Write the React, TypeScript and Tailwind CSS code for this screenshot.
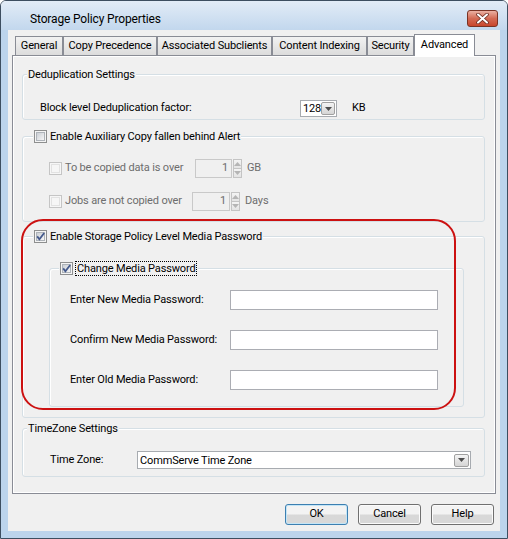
import React from "react";

type Kids = { children?: React.ReactNode };

function CheckBox({ checked = false, disabled = false }: { checked?: boolean; disabled?: boolean }) {
  return (
    <span
      className={`relative flex h-[13px] w-[13px] shrink-0 items-center justify-center border ${
        disabled ? "border-[#c5c5c5] bg-[#f6f6f6]" : "border-[#8e8f8f] bg-[#f4f4f4]"
      }`}
    >
      <span
        className={`block h-[9px] w-[9px] border ${
          disabled
            ? "border-[#e2e2e2] bg-[#f6f6f6]"
            : "border-[#aeb3b9] bg-linear-to-br from-[#cbcfd5] to-[#f6f6f6]"
        }`}
      />
      {checked && (
        <svg className="absolute left-0 top-0" width="11" height="11" viewBox="0 0 11 11">
          <path d="M2.2 5.4 L4.4 8.2 L9.2 2" fill="none" stroke="#44598c" strokeWidth="1.8" />
        </svg>
      )}
    </span>
  );
}

function Arrow({ up = false, color = "#4d4d4d" }: { up?: boolean; color?: string }) {
  return (
    <svg width="7" height="4" viewBox="0 0 7 4">
      <path d={up ? "M0 4h7L3.5 0z" : "M0 0h7L3.5 4z"} fill={color} />
    </svg>
  );
}

function SpinBox({ className }: { className: string }) {
  return (
    <div className="flex h-[19px] items-stretch">
      <div className={`flex items-center justify-end border border-[#c9c9c9] bg-[#f0f0f0] pr-[3px] text-[#6d6d6d] ${className}`}>
        1
      </div>
      <div className="ml-px flex w-[9px] flex-col">
        <div className="flex flex-1 items-center justify-center border border-[#c4c4c4] bg-linear-to-b from-[#f4f4f4] to-[#e4e4e4]">
          <Arrow up color="#b5b5b5" />
        </div>
        <div className="flex flex-1 items-center justify-center border border-t-0 border-[#c4c4c4] bg-linear-to-b from-[#f4f4f4] to-[#e4e4e4]">
          <Arrow color="#b5b5b5" />
        </div>
      </div>
    </div>
  );
}

function Combo({ value, className }: { value: string; className: string }) {
  return (
    <div className={`flex items-center border border-[#a7abb0] bg-white ${className}`}>
      <span className="flex-1 pl-[2px] leading-none">{value}</span>
      <span className="mr-px flex h-[13px] w-[15px] items-center justify-center rounded-[2px] border border-[#a0a0a0] bg-linear-to-b from-[#f4f4f4] to-[#d5d5d5]">
        <Arrow />
      </span>
    </div>
  );
}

function Group({ label, className, children }: { label: React.ReactNode; className: string } & Kids) {
  return (
    <div className={`relative shrink-0 rounded-[3px] border border-[#d5dfe5] shadow-[inset_1px_1px_0_#fff] ${className}`}>
      {label}
      {children}
    </div>
  );
}

function Tab({ children, className }: { className: string } & Kids) {
  return (
    <div
      className={`flex h-[19px] items-center justify-center border border-b-0 border-[#898c95] bg-linear-to-b from-[#f2f2f2] to-[#dcdcdc] pt-[1px] ${className}`}
    >
      {children}
    </div>
  );
}

function Button({ children, primary = false }: { primary?: boolean } & Kids) {
  return (
    <button
      className={`h-[21px] w-[63px] rounded-[3px] border bg-linear-to-b from-[#f3f3f3] from-45% to-[#d8d8d8] to-55% ${
        primary ? "border-[#3c7fb1] shadow-[inset_0_0_0_1px_#c4e5f6]" : "border-[#707070] shadow-[inset_0_0_0_1px_#fbfbfb]"
      }`}
    >
      {children}
    </button>
  );
}

function PasswordRow({ label }: { label: string }) {
  return (
    <div className="flex h-[20px] items-center">
      <span className="w-[160px]">{label}</span>
      <div className="h-[20px] w-[208px] border border-[#abadb3] bg-white" />
    </div>
  );
}

export default function App() {
  return (
    <div className="relative h-[539px] w-[508px] overflow-hidden bg-white text-[11px] tracking-[-0.15px] text-black [font-family:Roboto,'Liberation_Sans',sans-serif]">
      <div className="flex h-full w-full flex-col overflow-hidden rounded-t-[6px] border border-[#3d4e60]">
        {/* title bar */}
        <div className="flex h-[29px] shrink-0 items-start bg-linear-to-b from-[#e2ecf7] to-[#c2d7ed]">
          <span className="pl-[29px] pt-[10px] text-[12px] leading-[16px]">Storage Policy Properties</span>
          <span className="ml-auto mr-[9px] mt-[9px] flex h-[17px] w-[31px] items-center justify-center rounded-[3px] border border-[#7a3324] bg-linear-to-b from-[#eab0a2] via-[#d36a54] to-[#c8452b]">
            <svg width="13" height="11" viewBox="0 0 13 11">
              <path d="M2 1.5 L11 9.5 M11 1.5 L2 9.5" stroke="#6b2b20" strokeWidth="3.6" strokeLinecap="round" />
              <path d="M2 1.5 L11 9.5 M11 1.5 L2 9.5" stroke="#ffffff" strokeWidth="2" strokeLinecap="round" />
            </svg>
          </span>
        </div>

        {/* frame + client */}
        <div className="flex flex-1 flex-col bg-[#bcd4ec] px-[7px] pb-[7px]">
          <div className="flex flex-1 flex-col bg-[#f0f0f0] px-[4px] pt-[4px]">
            {/* tabs */}
            <div className="flex h-[21px] items-end pl-[3px]">
              <Tab className="w-[48px]">General</Tab>
              <Tab className="w-[94px]">Copy Precedence</Tab>
              <Tab className="w-[115px]">Associated Subclients</Tab>
              <Tab className="w-[95px]">Content Indexing</Tab>
              <Tab className="w-[47px]">Security</Tab>
              <div className="relative z-10 mb-[-1px] flex h-[22px] w-[61px] items-start justify-center border border-b-0 border-[#898c95] bg-white pt-[2px]">
                Advanced
              </div>
            </div>

            {/* panel */}
            <div className="flex h-[439px] flex-col border border-[#898c95] bg-[#f0f0f0] pl-[9px] pr-[10px] shadow-[inset_1px_1px_0_#fff,inset_-1px_-1px_0_#fff]">
              <Group
                className="mt-[18px] h-[46px]"
                label={
                  <span className="absolute -top-[8px] left-[4px] bg-[#f0f0f0] px-[1px] leading-[15px]">
                    Deduplication Settings
                  </span>
                }
              >
                <div className="flex items-center pl-[17px] pt-[25px]">
                  <span className="w-[260px]">Block level Deduplication factor:</span>
                  <Combo value="128" className="h-[17px] w-[37px]" />
                  <span className="ml-[15px]">KB</span>
                </div>
              </Group>

              <Group
                className="mt-[16px] h-[86px]"
                label={
                  <span className="absolute -top-[8px] left-[10px] flex items-center gap-[3px] bg-[#f0f0f0] px-[1px] leading-[15px]">
                    <CheckBox />
                    Enable Auxiliary Copy fallen behind Alert
                  </span>
                }
              >
                <div className="flex flex-col gap-[14px] pl-[26px] pt-[22px] text-[#6d6d6d]">
                  <div className="flex h-[19px] items-center">
                    <CheckBox disabled />
                    <span className="ml-[3px] w-[130px]">To be copied data is over</span>
                    <SpinBox className="w-[37px]" />
                    <span className="ml-[5px]">GB</span>
                  </div>
                  <div className="flex h-[19px] items-center">
                    <CheckBox disabled />
                    <span className="ml-[3px] w-[127px]">Jobs are not copied over</span>
                    <SpinBox className="w-[38px]" />
                    <span className="ml-[5px]">Days</span>
                  </div>
                </div>
              </Group>

              <Group
                className="mt-[14px] h-[182px]"
                label={
                  <span className="absolute -top-[8px] left-[10px] flex items-center gap-[3px] bg-[#f0f0f0] px-[1px] leading-[15px]">
                    <CheckBox checked />
                    Enable Storage Policy Level Media Password
                  </span>
                }
              >
                <Group
                  className="ml-[26px] mr-[20px] mt-[31px] h-[139px]"
                  label={
                    <span className="absolute -top-[8px] left-[9px] flex items-center gap-[2px] bg-[#f0f0f0] px-[1px] leading-[13px]">
                      <CheckBox checked />
                      <span className="border border-dotted border-black px-px">Change Media Password</span>
                    </span>
                  }
                >
                  <div className="flex flex-col gap-[20px] pl-[20px] pt-[21px]">
                    <PasswordRow label="Enter New Media Password:" />
                    <PasswordRow label="Confirm New Media Password:" />
                    <PasswordRow label="Enter Old Media Password:" />
                  </div>
                </Group>
              </Group>

              <Group
                className="mt-[10px] h-[49px]"
                label={
                  <span className="absolute -top-[8px] left-[4px] bg-[#f0f0f0] px-[1px] leading-[15px]">
                    TimeZone Settings
                  </span>
                }
              >
                <div className="flex items-center pl-[27px] pt-[22px]">
                  <span className="w-[87px]">Time Zone:</span>
                  <Combo value="CommServe Time Zone" className="h-[18px] w-[334px]" />
                </div>
              </Group>
            </div>

            {/* buttons */}
            <div className="mt-[10px] flex justify-end gap-[10px] pr-[2px]">
              <Button primary>OK</Button>
              <Button>Cancel</Button>
              <Button>Help</Button>
            </div>
          </div>
        </div>
      </div>

      {/* red highlight annotation */}
      <div className="pointer-events-none absolute left-[21px] top-[219px] h-[191px] w-[435px] rounded-[22px] border-2 border-[#cc1111]" />
    </div>
  );
}
